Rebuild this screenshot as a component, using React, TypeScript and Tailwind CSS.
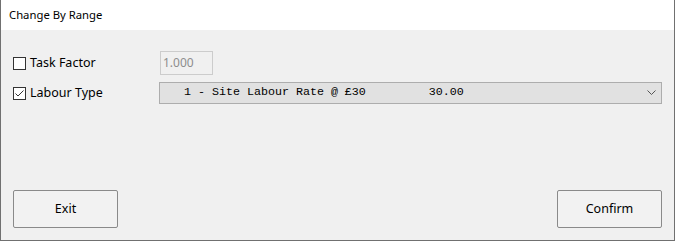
import React from "react";

function Check({ checked }: { checked?: boolean }) {
  return (
    <span className="flex h-[13px] w-[13px] items-center justify-center border border-[#333333] bg-white">
      {checked && (
        <svg width="11" height="11" viewBox="0 0 11 11" fill="none">
          <path d="M1.5 5.5 L4 8 L9.5 2.5" stroke="#333333" strokeWidth="1" />
        </svg>
      )}
    </span>
  );
}

export default function App() {
  return (
    <div
      className="flex h-[241px] w-[675px] flex-col border border-t-0 border-[#707070] bg-[#f0f0f0] text-[12px] text-black"
      style={{ fontFamily: '"Noto Sans", "Open Sans", sans-serif' }}
    >
      {/* title bar */}
      <div className="flex h-[30px] items-center bg-white pl-[8px] text-[11.3px]">Change By Range</div>

      <div className="flex flex-1 flex-col pl-[12px] pr-[12px] pt-[21px] pb-[12px]">
        <div className="flex h-[24px] items-center">
          <div className="flex w-[147px] items-center gap-[4px]">
            <Check />
            <span className="text-[12.5px]">Task Factor</span>
          </div>
          <div className="flex h-[24px] w-[53px] items-center border border-[#cccccc] bg-[#f0f0f0] pl-[2px] text-[12px] text-[#8d8d8d]">
            1.000
          </div>
        </div>

        <div className="mt-[7px] flex h-[22px] items-center">
          <div className="flex w-[146px] items-center gap-[4px]">
            <Check checked />
            <span className="text-[12.5px]">Labour Type</span>
          </div>
          <div className="flex h-[22px] flex-1 items-center justify-between border border-[#adadad] bg-[#e1e1e1] pl-[3px] pr-[5px]">
            <span
              className="whitespace-pre text-[11.67px] text-black"
              style={{ fontFamily: '"Liberation Mono", monospace' }}
            >
              {"   1 - Site Labour Rate @ £30         30.00"}
            </span>
            <svg width="9" height="6" viewBox="0 0 9 6" fill="none">
              <path d="M0.5 0.5 L4.5 4.5 L8.5 0.5" stroke="#555555" strokeWidth="1" />
            </svg>
          </div>
        </div>

        <div className="mt-auto flex justify-between">
          <button className="h-[38px] w-[105px] rounded-[2px] border border-[#8a8a8a] bg-[#f2f2f2] text-[12.5px]">
            Exit
          </button>
          <button className="h-[38px] w-[105px] rounded-[2px] border border-[#8a8a8a] bg-[#f2f2f2] text-[12.5px]">
            Confirm
          </button>
        </div>
      </div>
    </div>
  );
}
